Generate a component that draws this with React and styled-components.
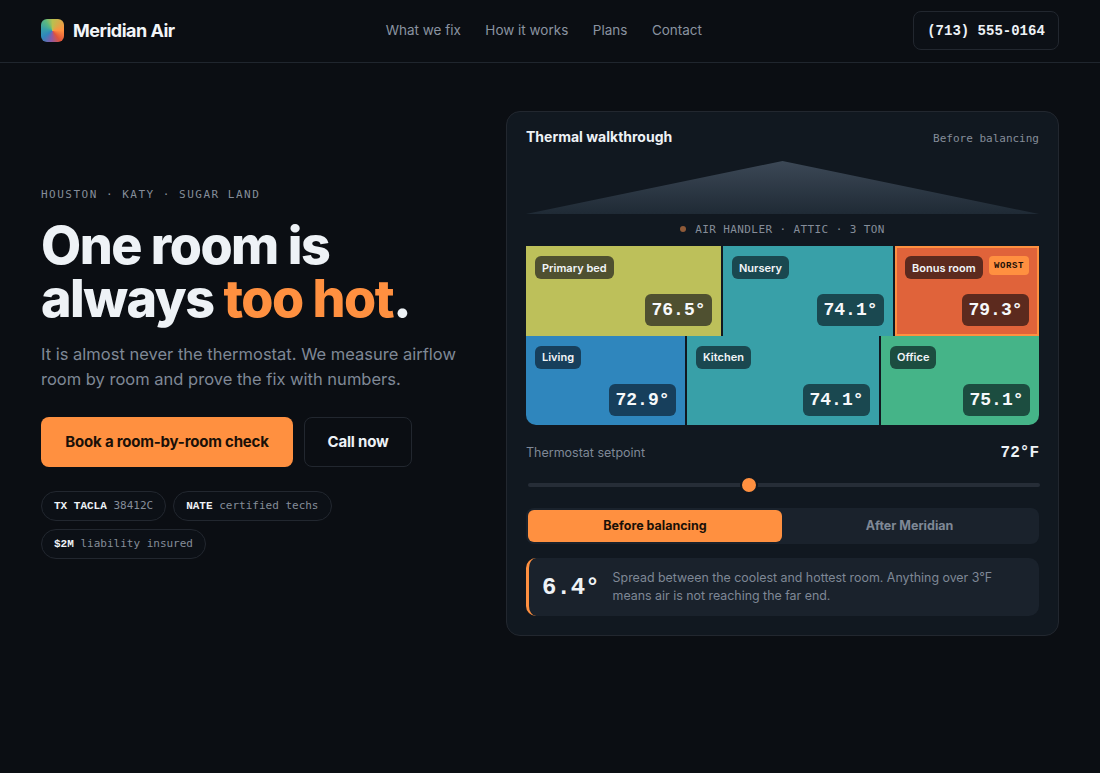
import React from 'react';
import styled, { createGlobalStyle } from 'styled-components';

const SANS = '"Inter", "Noto Sans", sans-serif';
const MONO = '"Liberation Mono", "DejaVu Sans Mono", monospace';
const LABEL = '"DejaVu Sans Mono", "Liberation Mono", monospace';

const topRooms = [
  { name: 'Primary bed', temp: '76.5°', bg: '#bdc05a', chip: '#4f5030', width: 195 },
  { name: 'Nursery', temp: '74.1°', bg: '#38a0a8', chip: '#1a4850', width: 170 },
  { name: 'Bonus room', temp: '79.3°', bg: '#e0633a', chip: '#5c2a1e', worst: true },
];

const bottomRooms = [
  { name: 'Living', temp: '72.9°', bg: '#2f86bd', chip: '#173f5c', width: 159 },
  { name: 'Kitchen', temp: '74.1°', bg: '#38a0a8', chip: '#1a4850', width: 192 },
  { name: 'Office', temp: '75.1°', bg: '#45b488', chip: '#1c4d40' },
];

const Room = ({ room }) => (
  <RoomCell $bg={room.bg} $width={room.width} $worst={room.worst}>
    <RoomTop>
      <RoomTag $bg={room.chip}>{room.name}</RoomTag>
      {room.worst && <WorstBadge>WORST</WorstBadge>}
    </RoomTop>
    <RoomTemp $bg={room.chip}>{room.temp}</RoomTemp>
  </RoomCell>
);

export default function App() {
  return (
    <>
      <GlobalStyle />
      <Header>
        <Brand>
          <Logo />
          <BrandName>Meridian Air</BrandName>
        </Brand>
        <Nav>
          <NavLink>What we fix</NavLink>
          <NavLink>How it works</NavLink>
          <NavLink>Plans</NavLink>
          <NavLink>Contact</NavLink>
        </Nav>
        <PhoneButton>(713) 555-0164</PhoneButton>
      </Header>
      <Hero>
        <Intro>
          <Eyebrow>HOUSTON · KATY · SUGAR LAND</Eyebrow>
          <Headline>
            One room is
            <br />
            always <Hot>too hot</Hot>.
          </Headline>
          <Lead>
            It is almost never the thermostat. We measure airflow room by room and prove the fix with numbers.
          </Lead>
          <Actions>
            <PrimaryButton>Book a room-by-room check</PrimaryButton>
            <GhostButton>Call now</GhostButton>
          </Actions>
          <Badges>
            <Badge><b>TX TACLA</b> 38412C</Badge>
            <Badge><b>NATE</b> certified techs</Badge>
            <Badge><b>$2M</b> liability insured</Badge>
          </Badges>
        </Intro>
        <Panel>
          <PanelHead>
            <PanelTitle>Thermal walkthrough</PanelTitle>
            <PanelState>Before balancing</PanelState>
          </PanelHead>
          <Roof />
          <Handler>
            <HandlerDot />
            AIR HANDLER · ATTIC · 3 TON
          </Handler>
          <FloorPlan>
            <RoomRow>
              {topRooms.map((room) => <Room key={room.name} room={room} />)}
            </RoomRow>
            <RoomRow>
              {bottomRooms.map((room) => <Room key={room.name} room={room} />)}
            </RoomRow>
          </FloorPlan>
          <Setpoint>
            <SetpointLabel>Thermostat setpoint</SetpointLabel>
            <SetpointValue>72°F</SetpointValue>
          </Setpoint>
          <Track>
            <Thumb style={{ left: '43.1%' }} />
          </Track>
          <Toggle>
            <ToggleButton $active>Before balancing</ToggleButton>
            <ToggleButton>After Meridian</ToggleButton>
          </Toggle>
          <Callout>
            <CalloutValue>6.4°</CalloutValue>
            <CalloutText>
              Spread between the coolest and hottest room. Anything over 3°F means air is not reaching the far end.
            </CalloutText>
          </Callout>
        </Panel>
      </Hero>
    </>
  );
}

const GlobalStyle = createGlobalStyle`
  * { box-sizing: border-box; }
  html, body { margin: 0; background: #0b0e13; }
  body { font-family: ${SANS}; color: #eef2f6; min-height: 773px; }
`;

const Header = styled.header`
  height: 63px;
  padding: 0 41px 2px;
  display: flex;
  align-items: center;
  justify-content: space-between;
  border-bottom: 1px solid #20262e;
`;

const Brand = styled.div`
  display: flex;
  align-items: center;
  gap: 9px;
`;

const Logo = styled.div`
  width: 23px;
  height: 23px;
  border-radius: 6px;
  background: conic-gradient(from 0deg, #b8c050, #ff9040 25%, #e0533a 40%, #8a5aa8 52%, #2f86bd 65%, #38a0a8 78%, #5cb880 90%, #b8c050);
`;

const BrandName = styled.div`
  font-size: 18px;
  font-weight: 700;
  letter-spacing: -0.5px;
  color: #f2f5f8;
`;

const Nav = styled.nav`
  display: flex;
  gap: 24.5px;
`;

const NavLink = styled.a`
  font-size: 13.5px;
  color: #8a93a0;
`;

const PhoneButton = styled.button`
  width: 146px;
  height: 39px;
  margin-top: 1px;
  background: #0c1016;
  border: 1px solid #22272f;
  border-radius: 8px;
  font-family: ${MONO};
  font-size: 14px;
  font-weight: 700;
  color: #eef2f6;
`;

const Hero = styled.main`
  padding: 48px 41px 0;
  display: grid;
  grid-template-columns: 1fr 553px;
  align-items: center;
`;

const Intro = styled.section`
  padding-bottom: 1px;
  display: flex;
  flex-direction: column;
  align-items: flex-start;
`;

const Eyebrow = styled.div`
  font-family: ${LABEL};
  font-size: 11px;
  line-height: 14px;
  letter-spacing: 1.5px;
  color: #858d99;
`;

const Headline = styled.h1`
  margin: 17px 0 0;
  font-size: 52px;
  line-height: 53px;
  font-weight: 800;
  letter-spacing: -1.5px;
  color: #eef2f6;
`;

const Hot = styled.span`
  color: #ff9040;
`;

const Lead = styled.p`
  margin: 17px 0 0;
  width: 430px;
  font-size: 16.5px;
  line-height: 25px;
  color: #7f8896;
`;

const Actions = styled.div`
  margin-top: 25px;
  display: flex;
  gap: 11px;
`;

const PrimaryButton = styled.button`
  width: 252px;
  height: 50px;
  background: #ff9040;
  border: 0;
  border-radius: 8px;
  font-family: ${SANS};
  font-size: 15px;
  font-weight: 700;
  letter-spacing: -0.2px;
  color: #1a1008;
`;

const GhostButton = styled.button`
  width: 108px;
  height: 50px;
  background: transparent;
  border: 1px solid #22272f;
  border-radius: 8px;
  font-family: ${SANS};
  font-size: 15px;
  font-weight: 700;
  letter-spacing: -0.2px;
  color: #eef2f6;
`;

const Badges = styled.div`
  margin-top: 24px;
  width: 320px;
  display: flex;
  flex-wrap: wrap;
  gap: 8px 7px;
`;

const Badge = styled.div`
  height: 30px;
  padding: 0 12px;
  display: flex;
  align-items: center;
  gap: 6.6px;
  background: #0c1016;
  border: 1px solid #22272f;
  border-radius: 15px;
  font-family: ${LABEL};
  font-size: 11px;
  color: #858d99;

  b {
    font-family: ${MONO};
    color: #eef2f6;
    font-weight: 700;
  }
`;

const Panel = styled.section`
  padding: 15px 19px 19px;
  background: #111820;
  border: 1px solid #22272f;
  border-radius: 14px;
  display: flex;
  flex-direction: column;
`;

const PanelHead = styled.div`
  height: 20px;
  display: flex;
  align-items: center;
  justify-content: space-between;
`;

const PanelTitle = styled.div`
  padding-bottom: 2px;
  font-size: 14px;
  font-weight: 700;
  color: #eef2f6;
`;

const PanelState = styled.div`
  padding-top: 2px;
  font-family: ${LABEL};
  font-size: 11px;
  color: #858d99;
`;

const Roof = styled.div`
  margin-top: 14px;
  height: 53px;
  background: linear-gradient(180deg, #3c4856, #1f2a35);
  clip-path: polygon(0 100%, 50% 0, 100% 100%);
`;

const Handler = styled.div`
  height: 32px;
  padding-bottom: 2px;
  display: flex;
  align-items: center;
  justify-content: center;
  gap: 9px;
  font-family: ${LABEL};
  font-size: 11px;
  letter-spacing: 0.4px;
  color: #858d99;
`;

const HandlerDot = styled.span`
  width: 6px;
  height: 6px;
  border-radius: 50%;
  background: #8f5a38;
`;

const FloorPlan = styled.div`
  border-radius: 0 0 10px 10px;
  overflow: hidden;
  display: flex;
  flex-direction: column;
`;

const RoomRow = styled.div`
  height: 89.5px;
  display: flex;
  gap: 2px;
`;

const RoomCell = styled.div`
  flex: ${(p) => (p.$width ? `0 0 ${p.$width}px` : '1 1 0')};
  padding: ${(p) => (p.$worst ? '8px 8px 7.5px' : '10px 9px 9.5px')};
  background: ${(p) => p.$bg};
  border: ${(p) => (p.$worst ? '2px solid #ff9040' : '0')};
  display: flex;
  flex-direction: column;
  justify-content: space-between;
`;

const RoomTop = styled.div`
  display: flex;
  align-items: flex-start;
  justify-content: space-between;
`;

const RoomTag = styled.div`
  height: 23px;
  padding: 0 7px;
  display: flex;
  align-items: center;
  align-self: flex-start;
  background: ${(p) => p.$bg};
  border-radius: 6px;
  font-size: 11px;
  font-weight: 600;
  color: #f2f5f8;
`;

const WorstBadge = styled.div`
  height: 19px;
  padding: 0 5px;
  display: flex;
  align-items: center;
  background: #ff9040;
  border-radius: 4px;
  font-family: ${MONO};
  font-size: 9px;
  font-weight: 700;
  letter-spacing: 0.6px;
  color: #1a1008;
`;

const RoomTemp = styled.div`
  align-self: flex-end;
  width: 67px;
  height: 32px;
  display: flex;
  align-items: center;
  justify-content: center;
  background: ${(p) => p.$bg};
  border-radius: 6px;
  font-family: ${MONO};
  font-size: 18px;
  font-weight: 700;
  color: #f6f8fa;
`;

const Setpoint = styled.div`
  margin-top: 17px;
  height: 20px;
  display: flex;
  align-items: center;
  justify-content: space-between;
`;

const SetpointLabel = styled.div`
  font-size: 12.5px;
  color: #7f8896;
`;

const SetpointValue = styled.div`
  padding-top: 2px;
  font-family: ${MONO};
  font-size: 16px;
  font-weight: 700;
  color: #eef2f6;
`;

const Track = styled.div`
  position: relative;
  margin: 21px 0 0 2px;
  width: 512px;
  height: 4px;
  background: #262d37;
  border-radius: 2px;
`;

const Thumb = styled.div`
  position: absolute;
  top: 50%;
  width: 18px;
  height: 18px;
  transform: translate(-50%, -50%);
  background: #ff9040;
  border: 2px solid #111820;
  border-radius: 50%;
`;

const Toggle = styled.div`
  margin-top: 21px;
  height: 36px;
  padding: 2px;
  display: grid;
  grid-template-columns: 254px 1fr;
  background: #1a222c;
  border-radius: 8px;
`;

const ToggleButton = styled.button`
  padding: 0 0 2px;
  background: ${(p) => (p.$active ? '#ff9040' : 'transparent')};
  border: 0;
  border-radius: 6px;
  font-family: ${SANS};
  font-size: 12.5px;
  font-weight: 700;
  color: ${(p) => (p.$active ? '#1a1008' : '#7f8896')};
`;

const Callout = styled.div`
  margin-top: 14px;
  height: 58px;
  padding: 0 16px 0 13px;
  display: flex;
  align-items: center;
  gap: 13px;
  background: #1a222c;
  border-left: 3px solid #ff9040;
  border-radius: 10px;
`;

const CalloutValue = styled.div`
  font-family: ${MONO};
  font-size: 24px;
  font-weight: 700;
  color: #eef2f6;
`;

const CalloutText = styled.div`
  font-size: 12.4px;
  line-height: 18px;
  color: #7f8896;
`;
